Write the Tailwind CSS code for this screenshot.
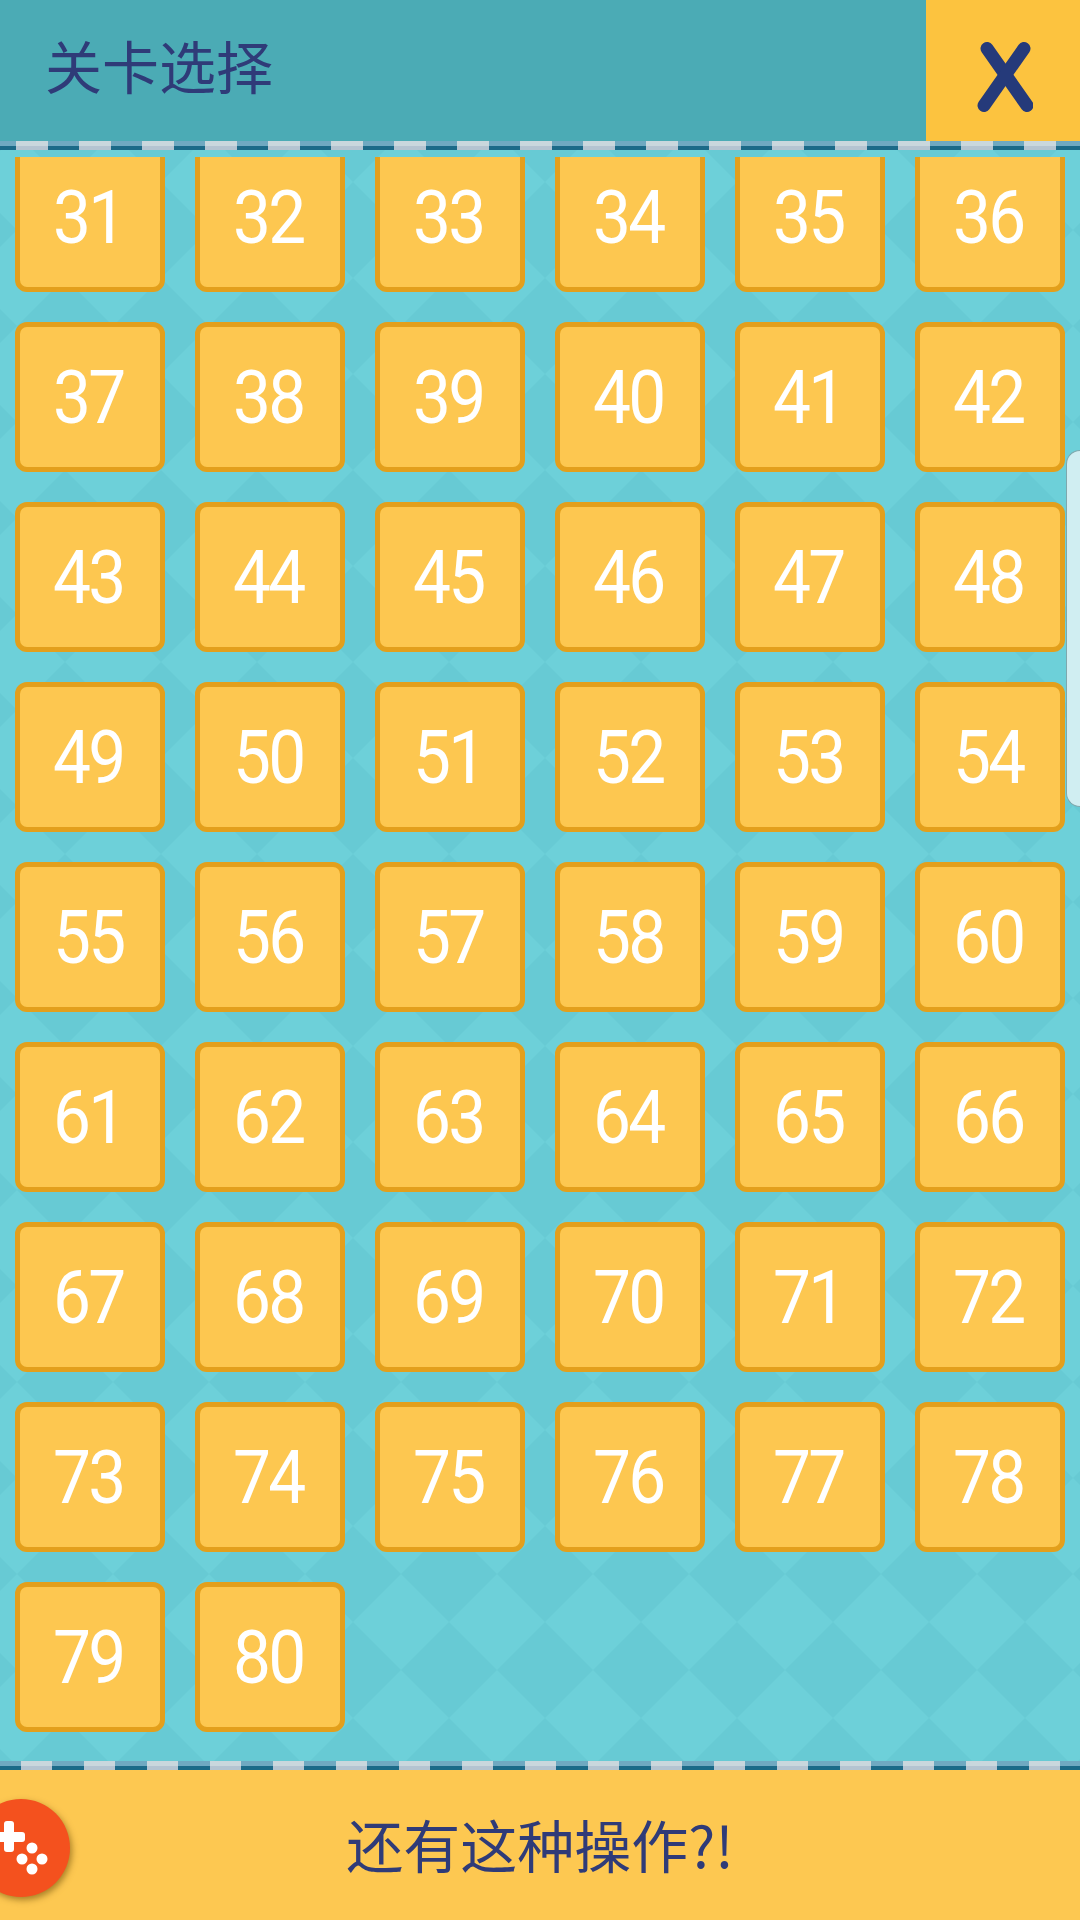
<!DOCTYPE html>
<html lang="zh">
<head>
  <meta charset="UTF-8">
  <meta name="viewport" content="width=device-width, initial-scale=1.0">
  <title>关卡选择</title>
  <script src="https://cdn.jsdelivr.net/npm/@tailwindcss/browser@4"></script>
</head>
<body class="bg-[#67cad4]">
  <div class="relative w-[1080px] h-[1920px] overflow-hidden flex flex-col font-['Noto_Sans_CJK_SC','Noto_Sans',sans-serif]">

    <!--header-->
    <header class="h-[141px] flex bg-[#4babb5]">
      <h1 class="flex-1 pl-[45px] pb-[12px] flex items-center text-[57px] font-normal text-[#2f3b78]">关卡选择</h1>
      <button class="w-[154px] pt-[6px] bg-[#fcc33f] flex items-center justify-center">
        <svg width="60" height="80" viewBox="0 0 60 80" fill="none" stroke="#253a7a" stroke-width="13" stroke-linecap="round">
          <path d="M14 14.5 L54 71.5"/>
          <path d="M51 14.5 L11 71.5"/>
        </svg>
      </button>
    </header>
    <div class="shrink-0">
      <div class="h-[5px] bg-[repeating-linear-gradient(90deg,#6fa9c1_0_16.5px,#c9d7dd_16.5px_48px,#6fa9c1_48px_63px)]"></div>
      <div class="h-[4px] bg-[repeating-linear-gradient(90deg,#1b6a88_0_16.5px,#b4c4d1_16.5px_48px,#1b6a88_48px_63px)]"></div>
    </div>

    <!--level grid-->
    <main class="relative flex-1 pt-[7px] overflow-hidden">
      <svg class="absolute inset-0 w-full h-full" xmlns="http://www.w3.org/2000/svg">
        <defs>
          <pattern id="diamonds" width="96" height="96" patternUnits="userSpaceOnUse" patternTransform="translate(17 -64)">
            <rect width="96" height="96" fill="#67cad4"/>
            <polygon points="48,0 96,48 48,96 0,48" fill="#6dd0d9" transform="translate(-48 -48)"/>
            <polygon points="48,0 96,48 48,96 0,48" fill="#6dd0d9" transform="translate(48 -48)"/>
            <polygon points="48,0 96,48 48,96 0,48" fill="#6dd0d9" transform="translate(-48 48)"/>
            <polygon points="48,0 96,48 48,96 0,48" fill="#6dd0d9" transform="translate(48 48)"/>
          </pattern>
        </defs>
        <rect width="100%" height="100%" fill="url(#diamonds)"/>
      </svg>
      <div class="relative h-full overflow-hidden">
        <div id="levels" class="grid grid-cols-6 gap-[30px] px-[15px] -mt-[15px]"></div>
      </div>
    </main>

    <div class="shrink-0">
      <div class="h-[5px] bg-[repeating-linear-gradient(90deg,#6fa9c1_0_21px,#c9d7dd_21px_52.5px,#6fa9c1_52.5px_63px)]"></div>
      <div class="h-[4px] bg-[repeating-linear-gradient(90deg,#1b6a88_0_21px,#b4c4d1_21px_52.5px,#1b6a88_52.5px_63px)]"></div>
    </div>

    <!--footer-->
    <footer class="h-[150px] bg-[#fdc851] flex items-center justify-center">
      <span class="text-[57px] text-[#2f3b78] pb-[2px]">还有这种操作?!</span>
    </footer>

    <!--floating game button-->
    <div class="absolute left-[-28px] top-[1799px] w-[98px] h-[98px] rounded-full bg-[#f4511e] shadow-[2px_3px_6px_rgba(90,60,0,0.5)]">
      <svg class="absolute left-0 top-0" width="98" height="98" viewBox="0 0 98 98" fill="#fff">
        <rect x="32" y="22" width="10" height="31" rx="3"/>
        <rect x="22" y="33" width="31" height="10" rx="3"/>
        <circle cx="60" cy="49" r="5.5"/>
        <circle cx="50" cy="60" r="5.5"/>
        <circle cx="70" cy="60" r="5.5"/>
        <circle cx="60" cy="70" r="5.5"/>
      </svg>
    </div>

    <!--side panel handle-->
    <div class="absolute right-0 top-[450px] w-[14px] h-[357px] rounded-l-[14px] bg-[#d0eef2] border border-r-0 border-[#7fa8ad]"></div>
  </div>

  <script>
    const levels = document.getElementById('levels');
    for (let i = 31; i <= 80; i++) {
      const tile = document.createElement('div');
      tile.className = "h-[150px] bg-[#fdc750] border-[5px] border-[#e39f1c] rounded-[12px] flex items-center justify-center";
      const label = document.createElement('span');
      label.className = "block scale-x-[0.9] tracking-[-3px] pr-[4px] text-[75px] leading-none text-white font-['Roboto',sans-serif]";
      label.textContent = i;
      tile.appendChild(label);
      levels.appendChild(tile);
    }
  </script>
</body>
</html>
